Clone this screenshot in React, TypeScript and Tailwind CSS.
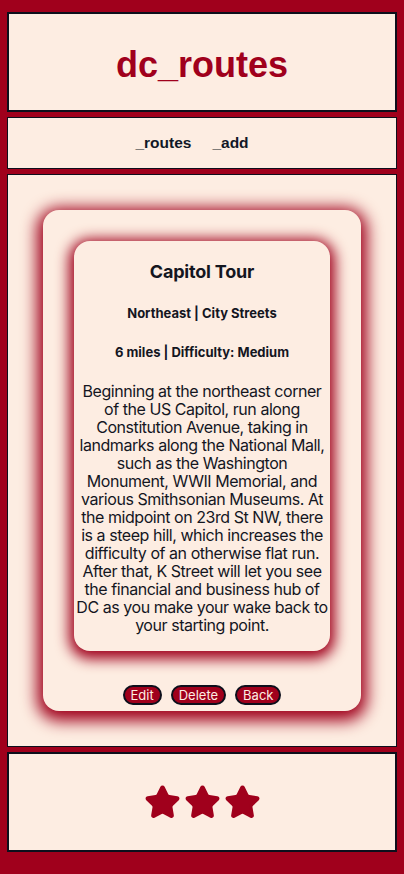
import { Star } from "lucide-react"

const route = {
  name: "Capitol Tour",
  area: "Northeast",
  surface: "City Streets",
  distance: "6 miles",
  difficulty: "Medium",
  description:
    "Beginning at the northeast corner of the US Capitol, run along Constitution Avenue, taking in landmarks along the National Mall, such as the Washington Monument, WWII Memorial, and various Smithsonian Museums. At the midpoint on 23rd St NW, there is a steep hill, which increases the difficulty of an otherwise flat run. After that, K Street will let you see the financial and business hub of DC as you make your wake back to your starting point.",
}

function Header() {
  return (
    <header className="h-[100px] border-2 border-[#0d0f1c] bg-[#fdede2] flex items-center justify-center">
      <h1 className="text-[36px] font-bold text-[#a0001c] font-['Liberation_Sans',Arial,sans-serif] leading-none pt-[6px]">
        dc_routes
      </h1>
    </header>
  )
}

function Nav() {
  return (
    <nav className="h-[52px] border border-[#0d0f1c] bg-[#fdede2] flex items-center justify-center gap-[21px] pr-[20px] font-['Liberation_Sans',Arial,sans-serif] text-[15.5px] font-bold text-[#111827]">
      <a href="#">_routes</a>
      <a href="#">_add</a>
    </nav>
  )
}

function RouteCard() {
  return (
    <div className="rounded-2xl bg-[#fdede2] shadow-[0_4px_16px_6px_#a0001c] px-[31px] pt-[31px] pb-[6px]">
      <div className="rounded-2xl bg-[#fdede2] shadow-[0_3px_14px_5px_#a0001c] px-[2px] pt-[20px] pb-[17px] text-center text-[#14161f] font-['Inter',sans-serif]">
        <h2 className="text-[18px] font-bold leading-[22px] tracking-[-0.2px]">{route.name}</h2>
        <h4 className="mt-[22px] text-[13px] font-bold leading-[16px]">
          {route.area} | {route.surface}
        </h4>
        <h4 className="mt-[23px] text-[13px] font-bold leading-[16px]">
          {route.distance} | Difficulty: {route.difficulty}
        </h4>
        <p className="mt-[22px] text-[16px] leading-[18px] tracking-[-0.45px]">{route.description}</p>
      </div>
      <div className="mt-[34px] flex justify-center gap-[9px] font-['Inter',sans-serif] text-[13px] text-[#fdede2]">
        <button className="h-[20px] rounded-full border-2 border-[#0d0f1c] bg-[#a0001c] px-[6px] leading-none">Edit</button>
        <button className="h-[20px] rounded-full border-2 border-[#0d0f1c] bg-[#a0001c] px-[6px] leading-none">Delete</button>
        <button className="h-[20px] rounded-full border-2 border-[#0d0f1c] bg-[#a0001c] px-[6px] leading-none">Back</button>
      </div>
    </div>
  )
}

function Footer() {
  return (
    <footer className="h-[100px] border-2 border-[#0d0f1c] bg-[#fdede2] flex items-center justify-center gap-[3px]">
      {[0, 1, 2].map((i) => (
        <Star key={i} size={37} fill="#a0001c" color="#a0001c" strokeWidth={2} />
      ))}
    </footer>
  )
}

export default function App() {
  return (
    <div className="min-h-[874px] bg-[#a0001c] px-[7px] pt-[12px] pb-[22px] flex flex-col gap-[5px]">
      <Header />
      <Nav />
      <main className="border border-[#0d0f1c] bg-[#fdede2] p-[35px]">
        <RouteCard />
      </main>
      <Footer />
    </div>
  )
}
